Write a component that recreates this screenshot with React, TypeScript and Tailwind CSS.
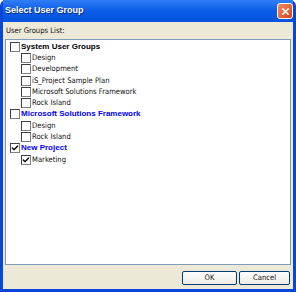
import { Check, X } from 'lucide-react';

type Row = { label: string; level: 0 | 1; checked?: boolean; color?: 'black' | 'blue' };

const rows: Row[] = [
  { label: 'System User Groups', level: 0, color: 'black' },
  { label: 'Design', level: 1 },
  { label: 'Development', level: 1 },
  { label: 'iS_Project Sample Plan', level: 1 },
  { label: 'Microsoft Solutions Framework', level: 1 },
  { label: 'Rock Island', level: 1 },
  { label: 'Microsoft Solutions Framework', level: 0, color: 'blue' },
  { label: 'Design', level: 1 },
  { label: 'Rock Island', level: 1 },
  { label: 'New Project', level: 0, checked: true, color: 'blue' },
  { label: 'Marketing', level: 1, checked: true },
];

// regular text is Tahoma-like (condensed DejaVu), bold headers match Arial widths
const font = { fontFamily: '"DejaVu Sans Condensed", "DejaVu Sans", sans-serif' };
const bold = { fontFamily: '"Liberation Sans", Arial, sans-serif' };

function Box({ checked }: { checked?: boolean }) {
  return (
    <span className="flex h-[10px] w-[10px] shrink-0 items-center justify-center border border-t-[#404040] border-l-[#404040] border-r-[#808080] border-b-[#808080] bg-white">
      {checked && <Check className="h-[8px] w-[8px] text-black" strokeWidth={4} />}
    </span>
  );
}

export default function App() {
  return (
    <div
      className="flex h-[292px] w-[296px] flex-col rounded-t-[6px] bg-[#0846d8] px-[3px] pb-[3px] text-[7.6px] text-[#111]"
      style={font}
    >
      {/* title bar */}
      <div className="flex h-[22px] shrink-0 items-center justify-between bg-gradient-to-b from-[#2f7ef6] via-[#0a5ce6] to-[#0553de] pl-[2px]">
        <span className="text-[9px] font-bold text-white [text-shadow:1px_1px_0_#0a2a80]" style={bold}>
          Select User Group
        </span>
        <span className="flex h-[16px] w-[16px] items-center justify-center rounded-[3px] border border-white bg-gradient-to-br from-[#f08a60] to-[#d8401c]">
          <X className="h-[11px] w-[11px] text-white" strokeWidth={3.5} />
        </span>
      </div>

      {/* body */}
      <div className="flex flex-1 flex-col bg-[#ece9d8] px-[2px] pt-[4px] pb-[3px]">
        <div className="pl-[1px] leading-[10px]">User Groups List:</div>
        <div className="mt-[3px] flex-1 border border-[#7f9db9] bg-white pt-[1px]">
          {rows.map((r, i) => (
            <div
              key={i}
              className={`flex h-[11.3px] items-center gap-[1px] ${r.level === 0 ? 'pl-[4px]' : 'pl-[15px]'}`}
            >
              <Box checked={r.checked} />
              <span
                className={`leading-none ${r.level === 0 ? 'text-[8px] font-bold' : ''} ${
                  r.color === 'blue' ? 'text-[#0000ff]' : r.level === 0 ? 'text-black' : ''
                }`}
                style={r.level === 0 ? bold : undefined}
              >
                {r.label}
              </span>
            </div>
          ))}
        </div>
        <div className="flex justify-end gap-[2px] pt-[6px] pb-[1px] pr-[1px]">
          <button className="h-[14px] w-[55px] rounded-[2px] border border-[#003c74] bg-gradient-to-b from-white to-[#ecebe6] text-[7.6px] leading-none">
            OK
          </button>
          <button className="h-[14px] w-[51px] rounded-[2px] border border-[#003c74] bg-gradient-to-b from-white to-[#ecebe6] text-[7.6px] leading-none">
            Cancel
          </button>
        </div>
      </div>
    </div>
  );
}
